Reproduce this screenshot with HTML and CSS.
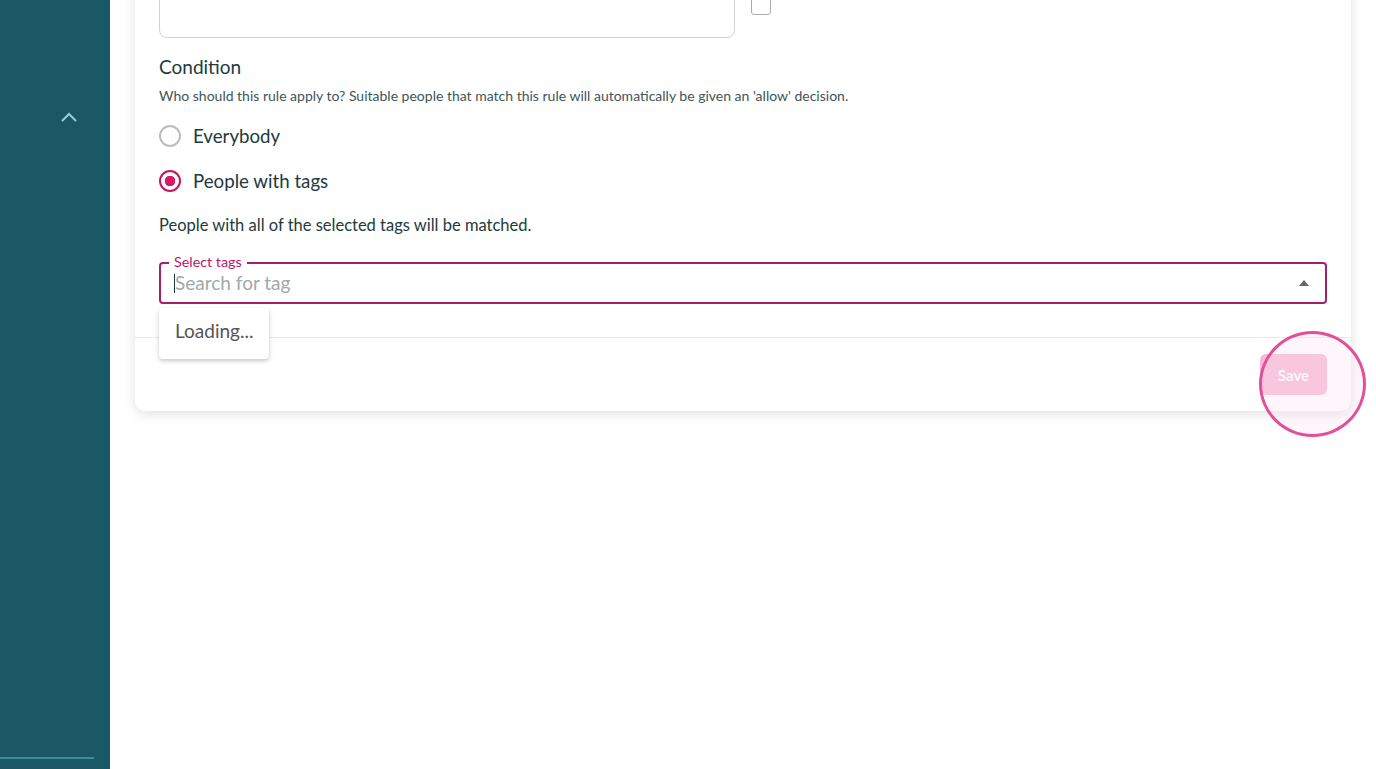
FILE: index.html
```html
<!DOCTYPE html>
<html>
<head>
  <meta charset="utf-8">
  <title>Rule settings</title>
  <link rel="stylesheet" href="styles.css">
</head>
<body>
<div class="Layout">

  <nav class="Sidebar">
    <button class="Sidebar-toggle" type="button" aria-label="Collapse">
      <svg width="16" height="10" viewBox="0 0 16 10"><path d="M1.5 8.5 L8 2 L14.5 8.5" fill="none" stroke="currentColor" stroke-width="2" stroke-linecap="round"/></svg>
    </button>
    <hr class="Sidebar-rule">
  </nav>

  <main class="Main">
    <section class="Card">

      <div class="Card-body">
        <div class="TopRow">
          <div class="TextBox"></div>
          <span class="Check"></span>
        </div>

        <h3 class="Heading">Condition</h3>
        <p class="Hint">Who should this rule apply to? Suitable people that match this rule will automatically be given an 'allow' decision.</p>

        <label class="Radio">
          <span class="Radio-dot"></span>
          Everybody
        </label>
        <label class="Radio">
          <span class="Radio-dot is-checked"></span>
          People with tags
        </label>

        <p class="Note">People with all of the selected tags will be matched.</p>

        <div class="TagSelect">
          <span class="TagSelect-label">Select tags</span>
          <span class="TagSelect-caret"></span><span class="TagSelect-placeholder">Search for tag</span>
          <svg class="TagSelect-arrow" width="10" height="6" viewBox="0 0 10 6"><path d="M0 6 L5 0 L10 6 Z" fill="#666"/></svg>
          <div class="TagSelect-menu">Loading...</div>
        </div>
      </div>

      <div class="Card-footer">
        <div class="SaveWrap">
          <button class="Save" type="button" disabled>Save</button>
          <span class="Highlight"></span>
        </div>
      </div>

    </section>
  </main>

</div>
</body>
</html>
```

FILE: styles.css
```css
html, body {
  margin: 0;
  height: 100%;
  overflow: hidden;
  background: #fff;
  font-family: "Lato", "Open Sans", sans-serif;
  color: #1f3b42;
}
.Layout {
  display: flex;
  height: 100%;
}
.Sidebar {
  position: relative;
  flex: 0 0 110px;
  background-color: #1b5866;
}
.Sidebar-toggle {
  display: block;
  margin: 110px 0 0 61px;
  padding: 0;
  border: 0;
  background: none;
  color: #8fcfd6;
}
.Sidebar-rule {
  position: absolute;
  left: 0;
  bottom: 10px;
  width: 94px;
  margin: 0;
  border: 0;
  border-top: 2px solid #3b8e99;
}
.Main {
  flex: 1;
  padding-left: 25px;
}
.Card {
  width: 1216px;
  border-radius: 0 0 10px 10px;
  background: #fff;
  box-shadow: 0 3px 12px rgba(0, 0, 0, 0.12);
}
.Card-body {
  padding: 0 24px 33px;
}
.TopRow {
  display: flex;
  align-items: flex-end;
  gap: 16px;
  margin-top: -22px;
}
.TextBox {
  box-sizing: border-box;
  width: 576px;
  height: 60px;
  border: 1px solid #cfd3d6;
  border-radius: 8px;
}
.Check {
  box-sizing: border-box;
  align-self: flex-start;
  width: 20px;
  height: 37px;
  border: 1px solid #a9aeb2;
  border-radius: 3px;
}
.Heading {
  margin: 18px 0 0;
  font-size: 19px;
  font-weight: 400;
  line-height: 22px;
  color: #1d3a40;
}
.Hint {
  margin: 10px 0 9px;
  font-size: 14px;
  line-height: 16px;
  color: #3e555b;
}
.Radio {
  display: flex;
  align-items: center;
  gap: 12px;
  height: 45px;
  font-size: 18.7px;
  color: #1d3a40;
}
.Radio-dot {
  box-sizing: border-box;
  display: block;
  width: 22px;
  height: 22px;
  border: 2px solid #bdbdbd;
  border-radius: 50%;
}
.Radio-dot.is-checked {
  border-color: #c5155f;
  background: radial-gradient(circle, #d81b60 0 5px, transparent 5.5px);
}
.Note {
  margin: 12px 0 27px;
  font-size: 16.5px;
  line-height: 20px;
  color: #1d3a40;
}
.TagSelect {
  box-sizing: border-box;
  position: relative;
  display: flex;
  align-items: center;
  height: 42px;
  padding: 0 13px;
  border: 2px solid #a61f68;
  border-radius: 4px;
}
.TagSelect-label {
  position: absolute;
  top: -10px;
  left: 8px;
  padding: 0 5px;
  background: #fff;
  font-size: 14.3px;
  line-height: 16px;
  color: #b8166d;
}
.TagSelect-caret {
  width: 1px;
  height: 19px;
  margin-top: 1px;
  background: #1d3a40;
}
.TagSelect-placeholder {
  flex: 1;
  margin-top: -1px;
  font-size: 19px;
  color: #a1a9ac;
}
.TagSelect-arrow {
  margin-right: 3px;
}
.TagSelect-menu {
  position: absolute;
  top: 44px;
  left: -2px;
  z-index: 2;
  padding: 11px 16px 16px;
  border-radius: 4px;
  background: #fff;
  box-shadow: 0 2px 4px rgba(0, 0, 0, 0.22);
  font-size: 19px;
  line-height: 24px;
  color: #555;
}
.Card-footer {
  display: flex;
  justify-content: flex-end;
  padding: 16px 24px;
  border-top: 1px solid #e6e8e9;
}
.SaveWrap {
  position: relative;
}
.Save {
  display: block;
  width: 67px;
  height: 41px;
  border: 0;
  border-radius: 6px;
  background-color: #f7bad6;
  color: #fff;
  font: inherit;
  font-size: 15px;
  font-weight: 700;
}
.Highlight {
  position: absolute;
  top: -23px;
  left: -1px;
  width: 101px;
  height: 100px;
  border: 3px solid #e2509a;
  border-radius: 50%;
  background: rgba(252, 225, 238, 0.3);
  pointer-events: none;
}
```
